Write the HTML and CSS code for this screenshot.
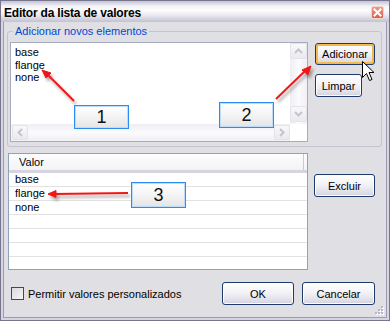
FILE: index.html
```html
<!DOCTYPE html>
<html lang="pt">
<head>
    <meta charset="UTF-8">
    <title>Editor da lista de valores</title>
    <link rel="stylesheet" href="styles.css">
</head>
<body>
    <div class="window">
        <div class="titlebar">
            <span class="title">Editor da lista de valores</span>
            <span class="close">
                <svg width="13" height="13" viewBox="0 0 13 13"><path d="M3.5 3.5 L9.5 9.5 M9.5 3.5 L3.5 9.5" stroke="#fff" stroke-width="2" stroke-linecap="square"/></svg>
            </span>
        </div>
        <div class="client">
            <fieldset class="group">
                <legend>Adicionar novos elementos</legend>
                <div class="group-row">
                    <div class="editbox">
                        <div class="edit-text">base<br>flange<br>none</div>
                        <div class="vscroll">
                            <span class="sbtn"><svg width="9" height="6" viewBox="0 0 9 6"><path d="M1 5 L4.5 1.5 L8 5" fill="none" stroke="#c4c4cc" stroke-width="2"/></svg></span>
                            <span class="sbtn"><svg width="9" height="6" viewBox="0 0 9 6"><path d="M1 1 L4.5 4.5 L8 1" fill="none" stroke="#c4c4cc" stroke-width="2"/></svg></span>
                        </div>
                        <div class="hscroll">
                            <span class="sbtn"><svg width="6" height="9" viewBox="0 0 6 9"><path d="M5 1 L1.5 4.5 L5 8" fill="none" stroke="#c4c4cc" stroke-width="2"/></svg></span>
                            <span class="sbtn"><svg width="6" height="9" viewBox="0 0 6 9"><path d="M1 1 L4.5 4.5 L1 8" fill="none" stroke="#c4c4cc" stroke-width="2"/></svg></span>
                        </div>
                        <div class="corner"></div>
                    </div>
                    <div class="btn-col">
                        <button class="btn hot btn-add">Adicionar</button>
                        <button class="btn btn-clear">Limpar</button>
                    </div>
                </div>
            </fieldset>

            <div class="list-row">
                <div class="listview">
                    <div class="lv-header"><span class="lv-col">Valor</span></div>
                    <div class="lv-row">base</div>
                    <div class="lv-row">flange</div>
                    <div class="lv-row">none</div>
                    <div class="lv-row"></div>
                    <div class="lv-row"></div>
                    <div class="lv-row"></div>
                    <div class="lv-row"></div>
                </div>
                <div class="btn-col">
                    <button class="btn btn-del">Excluir</button>
                </div>
            </div>

            <div class="footer">
                <label class="check"><span class="checkbox"></span>Permitir valores personalizados</label>
                <div class="footer-btns">
                    <button class="btn btn-ok">OK</button>
                    <button class="btn btn-cancel">Cancelar</button>
                </div>
            </div>
        </div>

        <!-- size grip -->
        <svg class="grip" width="10" height="10" viewBox="0 0 10 10">
            <g fill="#fff"><rect x="8" y="2" width="2" height="2"/><rect x="5" y="5" width="2" height="2"/><rect x="8" y="5" width="2" height="2"/><rect x="2" y="8" width="2" height="2"/><rect x="5" y="8" width="2" height="2"/><rect x="8" y="8" width="2" height="2"/></g>
            <g fill="#b8b7c6"><rect x="7" y="1" width="2" height="2"/><rect x="4" y="4" width="2" height="2"/><rect x="7" y="4" width="2" height="2"/><rect x="1" y="7" width="2" height="2"/><rect x="4" y="7" width="2" height="2"/><rect x="7" y="7" width="2" height="2"/></g>
        </svg>

        <!-- annotation arrows -->
        <svg class="arrows" width="390" height="321" viewBox="0 0 390 321">
            <defs>
                <filter id="shadow" x="-20%" y="-20%" width="160%" height="160%">
                    <feDropShadow dx="2" dy="3" stdDeviation="1.6" flood-color="#000" flood-opacity="0.35"/>
                </filter>
            </defs>
            <g filter="url(#shadow)" stroke="#f01818" stroke-width="2" fill="#f01818">
                <line x1="74" y1="101" x2="48" y2="75"/>
                <path d="M42 70 L51 73 L46 78 Z" stroke-width="1"/>
                <line x1="276" y1="99" x2="305" y2="71"/>
                <path d="M311 66 L308 75 L302 70 Z" stroke-width="1"/>
                <line x1="128" y1="193" x2="55" y2="194"/>
                <path d="M48 194 L56 190.5 L56 197.5 Z" stroke-width="1"/>
            </g>
        </svg>

        <div class="callout callout-1">1</div>
        <div class="callout callout-2">2</div>
        <div class="callout callout-3">3</div>

        <svg class="cursor" width="13" height="21" viewBox="0 0 13 21">
            <path d="M0.5 0.5 L0.5 16.5 L4.5 12.5 L7.5 19.5 L10 18.5 L7 11.5 L12 11.5 Z" fill="#fff" stroke="#000" stroke-width="1" stroke-linejoin="miter"/>
        </svg>
    </div>
</body>
</html>
```

FILE: styles.css
```css
body {
    margin: 0;
    font-family: "Liberation Sans", Arial, sans-serif;
    font-size: 11px;
    color: #000;
}
.window {
    position: relative;
    width: 390px;
    height: 321px;
    box-sizing: border-box;
    border: 1px solid #77768f;
    background: #e0dfe3;
    display: flex;
    flex-direction: column;
    overflow: hidden;
}
.titlebar {
    height: 21px;
    display: flex;
    align-items: center;
    justify-content: space-between;
    padding: 0 3px 0 3px;
    background: linear-gradient(#c4c3d4 0, #f4f4f8 25%, #fdfdfe 45%, #e6e6ee 70%, #c2c1d1 100%);
}
.title {
    font-weight: bold;
    font-size: 12px;
    letter-spacing: -0.2px;
    padding-top: 3px;
}
.close {
    width: 13px;
    height: 13px;
    border-radius: 2px;
    margin-top: 1px;
    margin-right: 2px;
    box-sizing: border-box;
    border: 1px solid #f3d6cc;
    background: linear-gradient(#f09a86, #dc5f48);
    display: flex;
    align-items: center;
    justify-content: center;
}
.close svg {
    display: block;
    margin: -1px;
}
.client {
    flex: 1;
    border: solid #d5d4e0;
    border-width: 0 2px 2px;
    box-shadow: inset 1px 0 #9c9bb2, inset -1px 0 #9c9bb2, inset 0 -1px #9c9bb2;
    padding: 3px 5px 0 4px;
}
.group {
    margin: 0;
    padding: 4px 6px 4px 2px;
    border: 1px solid #c4c3cf;
    border-radius: 3px;
}
.group legend {
    color: #0046d5;
    line-height: 13px;
    padding: 0 2px;
    margin-left: 3px;
}
.group-row {
    display: flex;
    gap: 7px;
}
.editbox {
    width: 298px;
    height: 100px;
    box-sizing: border-box;
    border: 1px solid #a5acbf;
    background: #fff;
    display: grid;
    grid-template-columns: 1fr 17px;
    grid-template-rows: 1fr 17px;
}
.edit-text {
    padding: 3px 4px;
    line-height: 12.5px;
}
.vscroll {
    background: linear-gradient(90deg, #eeeef3, #fbfbfd 50%, #f0f0f5);
    display: flex;
    flex-direction: column;
    justify-content: space-between;
    padding-bottom: 2px;
}
.hscroll {
    background: linear-gradient(#eeeef3, #fbfbfd 50%, #f0f0f5);
    display: flex;
    justify-content: space-between;
    padding: 1px 0 0 1px;
}
.corner {
    background: #fff;
}
.sbtn {
    box-sizing: border-box;
    border: 1px solid #e3e3e9;
    border-radius: 2px;
    background: linear-gradient(#f8f8fa, #ebebef);
    display: flex;
    align-items: center;
    justify-content: center;
}
.vscroll .sbtn {
    width: 17px;
    height: 16px;
}
.hscroll .sbtn {
    width: 16px;
    height: 15px;
}
.btn-col {
    display: flex;
    flex-direction: column;
    align-items: flex-start;
    gap: 9px;
    padding-top: 1px;
}
.btn {
    font-family: inherit;
    font-size: 11px;
    color: #000;
    height: 23px;
    padding: 0;
    box-sizing: border-box;
    border: 1px solid #1e3a6a;
    border-radius: 3px;
    background: linear-gradient(#ffffff, #f3f3f7 45%, #dedde8 85%, #cfcedc);
    box-shadow: inset 0 0 0 1px #fdfdfe;
}
.btn.hot {
    box-shadow: inset 0 0 0 2px #f5b94a;
}
.btn-add { width: 60px; height: 22px; }
.btn-clear { width: 47px; }
.btn-del { width: 61px; }
.btn-ok { width: 72px; }
.btn-cancel { width: 73px; }
.list-row {
    display: flex;
    gap: 6px;
    margin: 6px 0 0 1px;
}
.list-row .btn-col {
    padding-top: 21px;
}
.listview {
    width: 300px;
    height: 117px;
    box-sizing: border-box;
    border: 1px solid #8ea2bd;
    background: #fff;
    overflow: hidden;
}
.lv-header {
    height: 19px;
    box-sizing: border-box;
    background: linear-gradient(#fdfdfe, #f3f3f7);
    border-bottom: 3px solid #d5d4df;
    display: flex;
}
.lv-col {
    flex: 1;
    padding-left: 10px;
    line-height: 17px;
    margin-right: 3px;
    border-right: 1px solid #c9c8d4;
}
.lv-row {
    height: 14px;
    box-sizing: border-box;
    border-bottom: 1px solid #e2e2e2;
    padding-left: 6px;
    line-height: 13px;
}
.footer {
    display: flex;
    align-items: center;
    justify-content: space-between;
    margin-top: 12px;
    padding: 0 7px 0 4px;
}
.check {
    display: flex;
    align-items: center;
    gap: 4px;
}
.checkbox {
    width: 13px;
    height: 13px;
    box-sizing: border-box;
    border: 1px solid #2a4e7a;
    background: linear-gradient(135deg, #d8d8de, #f6f6f8);
}
.footer-btns {
    display: flex;
    gap: 8px;
}
.grip {
    position: absolute;
    right: 5px;
    bottom: 5px;
}
.arrows {
    position: absolute;
    left: -1px;
    top: -1px;
    pointer-events: none;
}
.callout {
    position: absolute;
    width: 55px;
    height: 24px;
    box-sizing: border-box;
    border: 1px solid #2c8cf2;
    box-shadow: inset 0 0 0 1px #bcdcfb;
    background: linear-gradient(#ffffff, #f4f4f4 50%, #e4e4e4);
    font-family: "Liberation Sans", sans-serif;
    font-size: 18px;
    line-height: 22px;
    text-align: center;
    color: #111;
}
.callout-1 { left: 73px; top: 104px; }
.callout-2 { left: 218px; top: 101px; height: 26px; line-height: 24px; }
.callout-3 { left: 130px; top: 181px; height: 26px; line-height: 24px; }
.cursor {
    position: absolute;
    left: 361px;
    top: 60px;
}
```
